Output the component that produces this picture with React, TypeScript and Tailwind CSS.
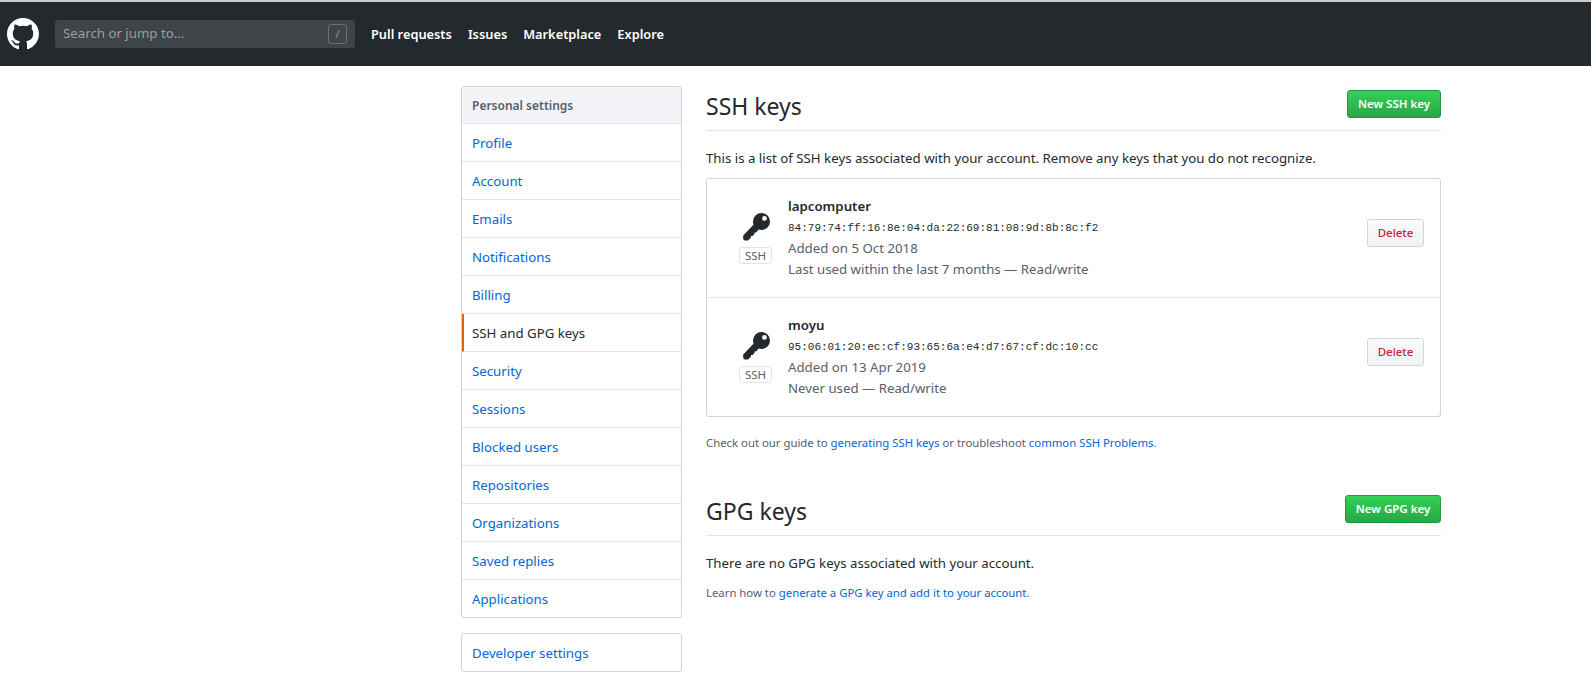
const navLinks = ["Pull requests", "Issues", "Marketplace", "Explore"];

const settingsLinks = [
  "Profile",
  "Account",
  "Emails",
  "Notifications",
  "Billing",
  "SSH and GPG keys",
  "Security",
  "Sessions",
  "Blocked users",
  "Repositories",
  "Organizations",
  "Saved replies",
  "Applications",
];

const sshKeys = [
  {
    name: "lapcomputer",
    fingerprint: "84:79:74:ff:16:8e:04:da:22:69:81:08:9d:8b:8c:f2",
    added: "Added on 5 Oct 2018",
    used: "Last used within the last 7 months — Read/write",
  },
  {
    name: "moyu",
    fingerprint: "95:06:01:20:ec:cf:93:65:6a:e4:d7:67:cf:dc:10:cc",
    added: "Added on 13 Apr 2019",
    used: "Never used — Read/write",
  },
];

const GithubMark = () => (
  <svg viewBox="0 0 16 16" className="h-8 w-8 shrink-0" fill="#ffffff">
    <path d="M8 0C3.58 0 0 3.58 0 8c0 3.54 2.29 6.53 5.47 7.59.4.07.55-.17.55-.38 0-.19-.01-.82-.01-1.49-2.01.37-2.53-.49-2.69-.94-.09-.23-.48-.94-.82-1.13-.28-.15-.68-.52-.01-.53.63-.01 1.08.58 1.23.82.72 1.21 1.87.87 2.33.66.07-.52.28-.87.51-1.07-1.78-.2-3.64-.89-3.64-3.95 0-.87.31-1.59.82-2.15-.08-.2-.36-1.02.08-2.12 0 0 .67-.21 2.2.82.64-.18 1.32-.27 2-.27.68 0 1.36.09 2 .27 1.53-1.04 2.2-.82 2.2-.82.44 1.1.16 1.92.08 2.12.51.56.82 1.27.82 2.15 0 3.07-1.87 3.75-3.65 3.95.29.25.54.73.54 1.48 0 1.07-.01 1.93-.01 2.2 0 .21.15.46.55.38A8.013 8.013 0 0016 8c0-4.42-3.58-8-8-8z" />
  </svg>
);

const KeyIcon = () => (
  <svg viewBox="0 0 28 28" className="h-7 w-7" fill="#24292e">
    <path
      fillRule="evenodd"
      d="M19.500 0a8.500 8.500 0 110 17c-1 0-2-.2-2.800-.5L14 19.500H12.500V21L10.500 23H9V24.500L6 27.500H3Q1.200 27.500 1.200 25.500V22.500L11.500 11.800c-.2-1-.5-1.800-.5-3.300A8.500 8.500 0 0119.500 0zM22.500 3a2.400 2.400 0 100 4.800 2.400 2.400 0 000-4.800z"
    />
  </svg>
);

const GreenButton = ({ label, width }: { label: string; width: string }) => (
  <button
    className={`h-7 ${width} rounded-[3px] border border-[#1f9b3b] bg-gradient-to-b from-[#34d058] to-[#28a745] text-center text-[11.5px] font-semibold text-white`}
  >
    {label}
  </button>
);

const App = () => {
  return (
    <div className="min-h-[700px] bg-white font-['Noto_Sans',sans-serif] text-[13.25px] text-[#24292e]">
      <header className="flex h-[66px] items-center border-t-2 border-[#c9c9c9] bg-[#24292e] pl-[7px]">
        <GithubMark />
        <div className="ml-4 flex h-7 w-[300px] items-center justify-between rounded-[3px] bg-[#3f4448] px-2">
          <span className="text-[#9a9ea1]">Search or jump to...</span>
          <span className="flex h-5 w-[19px] items-center justify-center rounded-[3px] border border-[#6a6e72] text-[11px] text-[#9a9ea1]">
            /
          </span>
        </div>
        <nav className="ml-4 flex gap-4 pt-px text-[12.8px] font-semibold text-white">
          {navLinks.map((link) => (
            <span key={link}>{link}</span>
          ))}
        </nav>
      </header>

      <div className="ml-[461px] flex w-[980px] items-start pt-5">
        <aside className="w-[221px] shrink-0">
          <div className="overflow-hidden rounded-[3px] border border-[#d1d5da]">
            <div className="flex h-[37px] items-center border-b border-[#e1e4e8] bg-[#f3f4f8] pl-[10px] pt-px text-xs font-semibold text-[#586069]">
              Personal settings
            </div>
            {settingsLinks.map((link, i) => {
              const selected = link === "SSH and GPG keys";
              const last = i === settingsLinks.length - 1;
              return (
                <div
                  key={link}
                  className={`flex items-center pt-[2px] ${last ? "h-[37px]" : "h-[38px] border-b border-[#e1e4e8]"} ${
                    selected ? "border-l-2 border-l-[#e36209] pl-[8px] text-[#24292e]" : "pl-[10px] text-[#0366d6]"
                  }`}
                >
                  {link}
                </div>
              );
            })}
          </div>
          <div className="mt-[15px] flex h-[39px] items-center rounded-[3px] border border-[#d1d5da] pl-[10px] pt-[3px] text-[#0366d6]">
            Developer settings
          </div>
        </aside>

        <main className="ml-6 w-[735px] shrink-0">
          <div className="flex h-[45px] items-start justify-between border-b border-[#e1e4e8]">
            <h2 className="text-[23px] leading-[40px] font-normal">SSH keys</h2>
            <div className="mt-[4px]">
              <GreenButton label="New SSH key" width="w-[94px]" />
            </div>
          </div>
          <p className="mt-[17px] leading-[20px]">
            This is a list of SSH keys associated with your account. Remove any keys that you do not recognize.
          </p>
          <div className="mt-[10px] rounded-[3px] border border-[#d1d5da]">
            {sshKeys.map((key, i) => (
              <div
                key={key.name}
                className={`flex items-center pl-[32px] pr-4 ${
                  i === 0 ? "h-[119px] border-b border-[#e1e4e8]" : "h-[118px]"
                }`}
              >
                <div className="flex w-[33px] flex-col items-center gap-[6px]">
                  <KeyIcon />
                  <span className="rounded-[3px] border border-[#e1e4e8] px-[5px] text-[11.5px] leading-[15px] text-[#586069]">
                    SSH
                  </span>
                </div>
                <div className="ml-4 flex-1">
                  <div className="leading-[20px] font-semibold">{key.name}</div>
                  <div className="mt-[2px] font-['Liberation_Mono',monospace] text-[11px] leading-[20px]">
                    {key.fingerprint}
                  </div>
                  <div className="leading-[21px] text-[#586069]">{key.added}</div>
                  <div className="leading-[21px] text-[#586069]">{key.used}</div>
                </div>
                <button className="mb-auto mt-[40px] h-7 w-[57px] rounded-[3px] border border-[#d1d5da] bg-gradient-to-b from-[#fafbfc] to-[#eff3f6] text-[11.5px] font-medium text-[#cb2431]">
                  Delete
                </button>
              </div>
            ))}
          </div>
          <p className="mt-4 text-[11.35px] leading-[20px] text-[#586069]">
            Check out our guide to <span className="text-[#0366d6]">generating SSH keys</span> or troubleshoot{" "}
            <span className="text-[#0366d6]">common SSH Problems</span>.
          </p>

          <div className="mt-[38px] flex h-[45px] items-start justify-between border-b border-[#e1e4e8]">
            <h2 className="text-[23px] leading-[40px] font-normal">GPG keys</h2>
            <div className="mt-[4px]">
              <GreenButton label="New GPG key" width="w-[96px]" />
            </div>
          </div>
          <p className="mt-[17px] leading-[20px]">There are no GPG keys associated with your account.</p>
          <p className="mt-[10px] text-[11.35px] leading-[20px] text-[#586069]">
            Learn how to <span className="text-[#0366d6]">generate a GPG key and add it to your account</span>.
          </p>
        </main>
      </div>
    </div>
  );
};

export default App;
